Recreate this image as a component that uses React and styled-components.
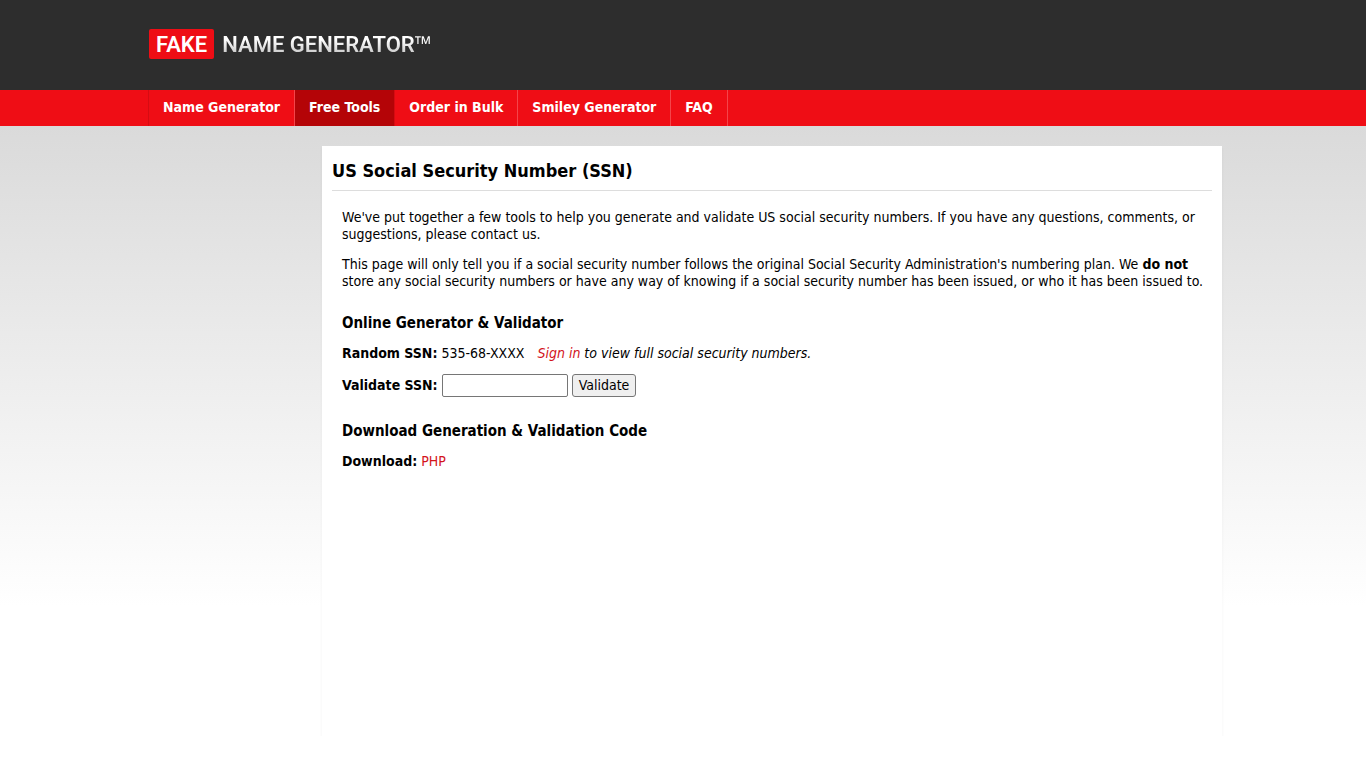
import React from "react";
import styled, { createGlobalStyle } from "styled-components";

const navItems = [
	{ label: "Name Generator" },
	{ label: "Free Tools", active: true },
	{ label: "Order in Bulk" },
	{ label: "Smiley Generator" },
	{ label: "FAQ" },
];

export default function App() {
	const [ssn, setSsn] = React.useState("");
	return (
		<>
			<GlobalStyle />
			<Header>
				<Container>
					<Logo href='#'>
						<LogoBadge>FAKE</LogoBadge>
						<LogoText>
							NAME GENERATOR<Trademark>™</Trademark>
						</LogoText>
					</Logo>
				</Container>
			</Header>
			<NavBar>
				<Container>
					<NavList>
						{navItems.map(({ label, active }) => (
							<li key={label}>
								<NavLink href='#' $active={active}>
									{label}
								</NavLink>
							</li>
						))}
					</NavList>
				</Container>
			</NavBar>
			<Page>
				<Container>
					<Panel>
						<Title>US Social Security Number (SSN)</Title>
						<Content>
							<Paragraph>
								We've put together a few tools to help you generate and validate US social security
								numbers. If you have any questions, comments, or suggestions, please contact us.
							</Paragraph>
							<Paragraph>
								This page will only tell you if a social security number follows the original Social
								Security Administration's numbering plan. We <b>do not</b> store any social security
								numbers or have any way of knowing if a social security number has been issued, or who
								it has been issued to.
							</Paragraph>
							<SubHeading>Online Generator &amp; Validator</SubHeading>
							<Row>
								<b>Random SSN:</b>
								<span>535-68-XXXX</span>
								<Note>
									<Link href='#'>Sign in</Link> to view full social security numbers.
								</Note>
							</Row>
							<Form onSubmit={(e) => e.preventDefault()}>
								<Label htmlFor='ssn'>Validate SSN:</Label>
								<Input id='ssn' type='text' value={ssn} onChange={(e) => setSsn(e.target.value)} />
								<Button type='submit'>Validate</Button>
							</Form>
							<SubHeading>Download Generation &amp; Validation Code</SubHeading>
							<Row>
								<b>Download:</b>
								<Link href='#'>PHP</Link>
							</Row>
						</Content>
					</Panel>
				</Container>
			</Page>
		</>
	);
}

const GlobalStyle = createGlobalStyle`
	* {
		box-sizing: border-box;
	}
	body {
		margin: 0;
		background: #fff;
		color: #000;
		font-family: Tahoma, "DejaVu Sans Condensed", sans-serif;
		font-size: 14px;
		line-height: 17px;
	}
`;

const Container = styled.div`
	max-width: 1078px;
	margin: 0 auto;
	padding-left: 4px;
`;

const Header = styled.header`
	padding: 29px 0 31px;
	background: #2d2d2d;
`;

const Logo = styled.a`
	display: flex;
	width: fit-content;
	gap: 8px;
	padding-left: 1px;
	color: #fff;
	font-family: Roboto, sans-serif;
	font-size: 22px;
	font-weight: 600;
	line-height: 28px;
	text-decoration: none;
`;

const LogoBadge = styled.span`
	padding: 2px 7px 0;
	border-radius: 2px;
	background: #ee0d15;
`;

const LogoText = styled.span`
	padding-top: 2px;
	background: linear-gradient(#fff 35%, #ccc 80%);
	background-clip: text;
	color: transparent;
`;

const Trademark = styled.span`
	font-family: "Open Sans", sans-serif;
	font-weight: 400;
	line-height: 1;
`;

const NavBar = styled.nav`
	background: #ef0d15;
`;

const NavList = styled.ul`
	display: flex;
	margin: 0;
	padding: 0;
	list-style: none;
	border-left: 1px solid #d60b12;
`;

const NavLink = styled.a`
	display: block;
	padding: 9px 14px 10px;
	border-right: 1px solid ${({ $active }) => ($active ? "#d60b12" : "#f4444a")};
	background: ${({ $active }) => ($active ? "#b40407" : "transparent")};
	color: #fff;
	font-weight: bold;
	text-decoration: none;
`;

const Page = styled.div`
	padding-top: 20px;
	background: linear-gradient(#dadada, #fff 480px);
`;

const Panel = styled.main`
	max-width: 900px;
	min-height: 590px;
	margin-left: auto;
	padding: 14px 10px;
	background: #fff;
	box-shadow: 0 2px 3px rgba(0, 0, 0, 0.05);
`;

const Title = styled.h1`
	margin: 0;
	padding-bottom: 8px;
	border-bottom: 1px solid #ddd;
	font-size: 18px;
	line-height: 22px;
`;

const Content = styled.div`
	padding: 18px 0 18px 10px;
`;

const Paragraph = styled.p`
	margin: 0 0 13px;
`;

const SubHeading = styled.h2`
	margin: 24px 0 13px;
	font-size: 15px;
	line-height: 18px;
`;

const Row = styled.div`
	display: flex;
	gap: 4px;
`;

const Note = styled.i`
	margin-left: 9px;
`;

const Link = styled.a`
	color: #d3141c;
	text-decoration: none;
`;

const Form = styled.form`
	display: flex;
	align-items: center;
	gap: 4px;
	margin-top: 12px;
	padding-bottom: 1px;
`;

const Label = styled.label`
	font-weight: bold;
`;

const Input = styled.input`
	width: 126px;
	height: 23px;
	padding: 1px 2px;
	border: 1px solid #767676;
	border-radius: 2px;
	font: inherit;
`;

const Button = styled.button`
	height: 23px;
	padding: 0 6px;
	border: 1px solid #767676;
	border-radius: 3px;
	background: #efefef;
	color: #000;
	font: inherit;
`;
